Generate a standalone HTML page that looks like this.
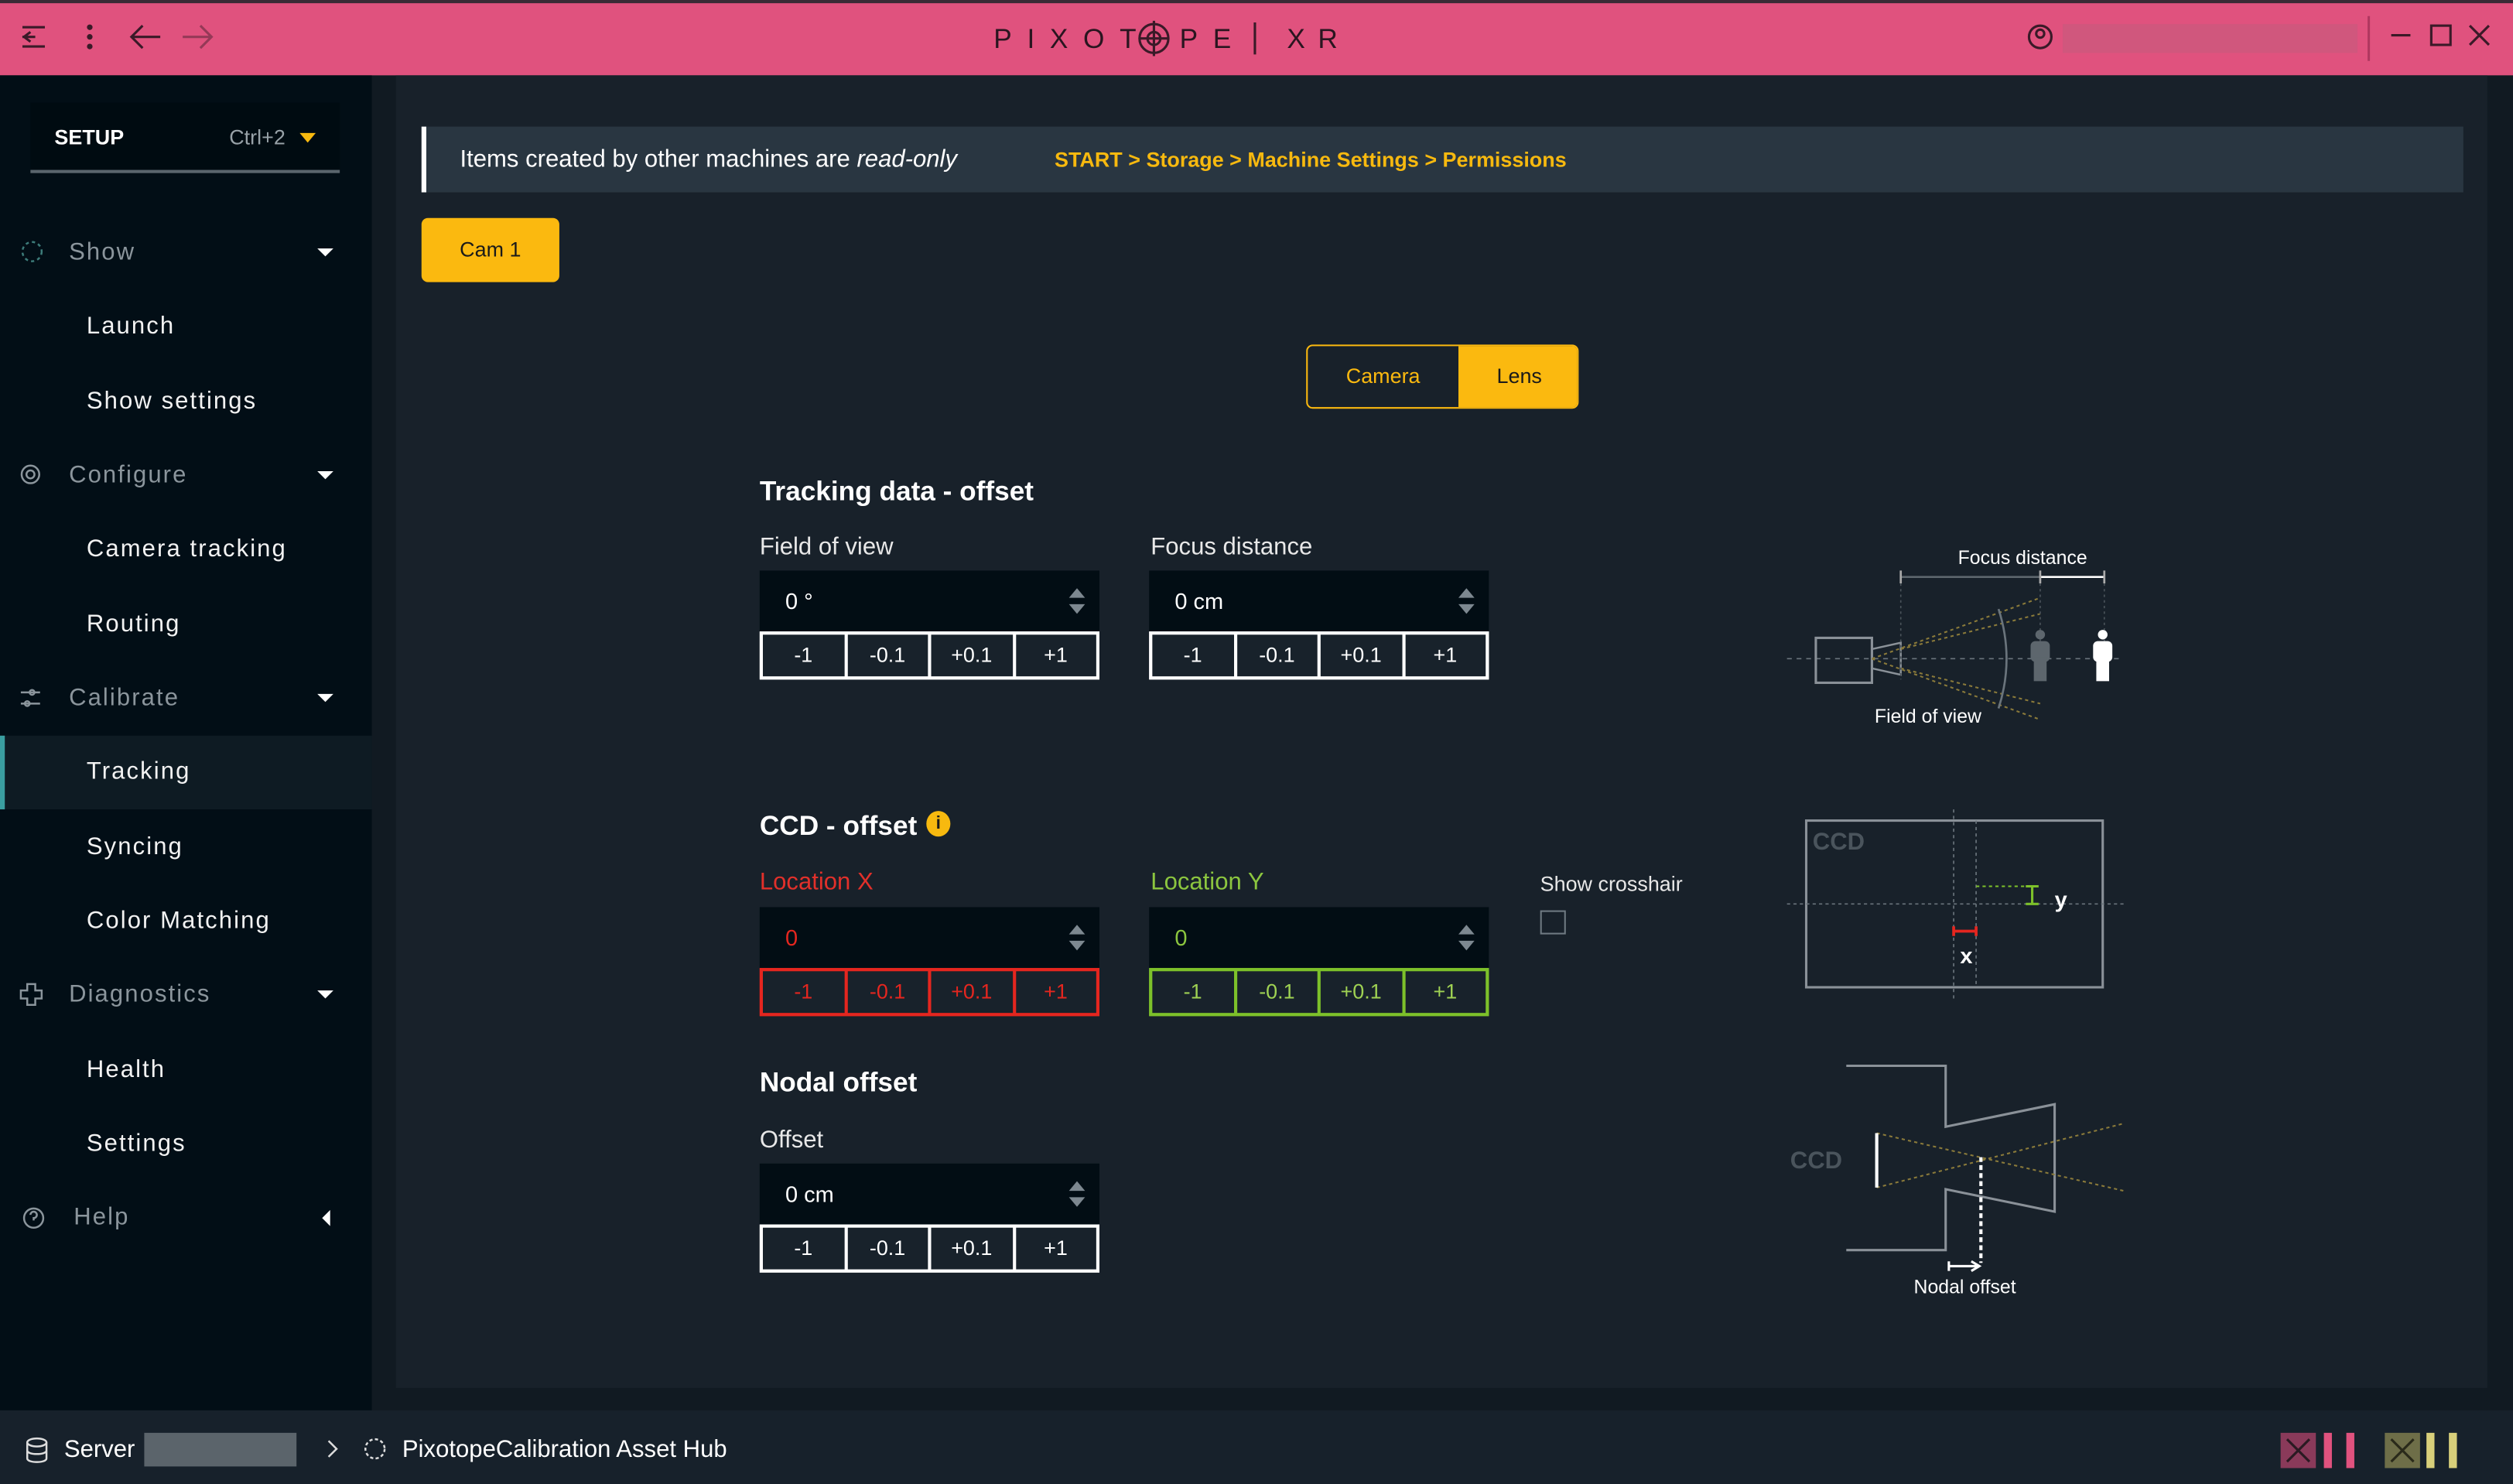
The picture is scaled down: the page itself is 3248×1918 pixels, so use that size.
<!DOCTYPE html>
<html><head><meta charset="utf-8">
<style>
*{box-sizing:border-box;margin:0;padding:0}
html,body{width:3248px;height:1918px;overflow:hidden;background:#17202a}
#s{position:absolute;left:0;top:0;width:1568px;height:926px;transform:scale(2.07143);transform-origin:0 0;font-family:"Liberation Sans",sans-serif;color:#fff;background:#111a22}
.a{position:absolute}
.menu{position:absolute;left:0;font-size:15px;letter-spacing:1px;white-space:nowrap}
.cat{color:#8b959c;left:43px}
.sub{color:#f2f2f2;left:54px}
.car{position:absolute;left:198px;width:0;height:0;border-left:5px solid transparent;border-right:5px solid transparent;border-top:5px solid #fff}
.inp{position:absolute;width:212px;height:38px;background:#020d14;font-size:14px;padding:11px 16px}
.sp{position:absolute;right:9px;top:11px;width:0;height:0;border-left:5px solid transparent;border-right:5px solid transparent;border-bottom:6px solid #7d8890}
.sp2{position:absolute;right:9px;top:21px;width:0;height:0;border-left:5px solid transparent;border-right:5px solid transparent;border-top:6px solid #7d8890}
.row{position:absolute;width:212px;height:30px;display:flex;border:2px solid #fff;background:#fff;gap:2px}
.row div{flex:1;background:#18222b;font-size:13px;text-align:center;line-height:26px;color:#fff}
.row.r{border-color:#e5261f;background:#e5261f}.row.r div{color:#e5261f}
.row.g{border-color:#7dc12a;background:#7dc12a}.row.g div{color:#9fd253}
.h{position:absolute;font-size:17px;font-weight:bold}
.l{position:absolute;font-size:15px;color:#e8e8e8}
</style></head><body><div id="s">
<!-- titlebar -->
<div class="a" style="left:0;top:0;width:1568px;height:47px;background:#e0527e;border-top:2px solid #3a2a35"></div>
<svg class="a" style="left:0;top:0" width="1568" height="47">
<g stroke="#3a1a28" stroke-width="1.5" fill="none">
<path d="M14 17h14M14 23h8M14 29h14M19 20l-4 3 4 3"/>
<circle cx="56" cy="17" r="1" fill="#3a1a28"/><circle cx="56" cy="23" r="1" fill="#3a1a28"/><circle cx="56" cy="29" r="1" fill="#3a1a28"/>
<path d="M100 23H83M89 16l-7 7 7 7"/>
<path d="M114 23h17M125 16l7 7-7 7" opacity=".45"/>
<circle cx="1273" cy="23" r="7"/><circle cx="1273" cy="21" r="2.5"/>
<path d="M1478 10v28" stroke="#b03860"/>
<path d="M1492 22h12"/><rect x="1517" y="16" width="12" height="12"/><path d="M1541 16l12 12M1553 16l-12 12"/>
<circle cx="720" cy="24" r="9"/><circle cx="720" cy="24" r="4"/><path d="M720 13v22M711 24h18"/>
<path d="M783 14v20"/>
</g>
<rect x="1287" y="15" width="184" height="18" fill="#c95a7e" opacity=".7"/>
<text x="620" y="30" font-size="17" letter-spacing="9.5" fill="#2a1520" font-family="Liberation Sans">PIXOT</text>
<text x="736" y="30" font-size="17" letter-spacing="9.5" fill="#2a1520" font-family="Liberation Sans">PE</text>
<text x="803" y="30" font-size="17" letter-spacing="8" fill="#2a1520" font-family="Liberation Sans">XR</text>
</svg>
<!-- sidebar -->
<div class="a" style="left:0;top:47px;width:232px;height:833px;background:#020e16"></div>
<div class="a" style="left:247px;top:47px;width:1305px;height:819px;background:#18212a"></div>
<div class="a" style="left:19px;top:64px;width:193px;height:44px;background:#000b11;border-bottom:2px solid #5a656d"></div>
<div class="a" style="left:34px;top:78px;font-size:13px;font-weight:bold">SETUP</div>
<div class="a" style="left:143px;top:78px;font-size:13px;color:#98a2a8">Ctrl+2</div>
<div class="a" style="left:187px;top:83px;border-left:5px solid transparent;border-right:5px solid transparent;border-top:6px solid #f7b90f"></div>
<div class="a" style="left:0;top:459px;width:232px;height:46px;background:#0e1b23;border-left:3px solid #3a9ea0"></div>
<svg class="a" style="left:0;top:0" width="40" height="780"><g stroke="#8b959c" fill="none" stroke-width="1.2">
<circle cx="20" cy="157" r="6" stroke="#3d7c7a" stroke-dasharray="2 2"/>
<circle cx="19" cy="296" r="5.5"/><circle cx="19" cy="296" r="2.5"/>
<path d="M13 432h12M13 439h12"/><circle cx="20" cy="432" r="1.5"/><circle cx="17" cy="439" r="1.5"/>
<path d="M17 614h5v4h4v5h-4v4h-5v-4h-4v-5h4z"/>
<circle cx="21" cy="760" r="6"/><path d="M19 758a2 2 0 1 1 2 2v1.5"/>
</g></svg>
<div class="menu cat" style="top:149px">Show</div><div class="car" style="top:155px"></div>
<div class="menu sub" style="top:195px">Launch</div>
<div class="menu sub" style="top:242px">Show settings</div>
<div class="menu cat" style="top:288px">Configure</div><div class="car" style="top:294px"></div>
<div class="menu sub" style="top:334px">Camera tracking</div>
<div class="menu sub" style="top:381px">Routing</div>
<div class="menu cat" style="top:427px">Calibrate</div><div class="car" style="top:433px"></div>
<div class="menu sub" style="top:473px">Tracking</div>
<div class="menu sub" style="top:520px">Syncing</div>
<div class="menu sub" style="top:566px">Color Matching</div>
<div class="menu cat" style="top:612px">Diagnostics</div><div class="car" style="top:618px"></div>
<div class="menu sub" style="top:659px">Health</div>
<div class="menu sub" style="top:705px">Settings</div>
<div class="menu cat" style="top:751px;left:46px">Help</div>
<div class="a" style="left:201px;top:755px;border-top:5px solid transparent;border-bottom:5px solid transparent;border-right:5px solid #fff"></div>
<!-- banner -->
<div class="a" style="left:263px;top:79px;width:1274px;height:41px;background:#293641;border-left:3px solid #fff"></div>
<div class="a" style="left:287px;top:91px;font-size:15px">Items created by other machines are <i>read-only</i></div>
<div class="a" style="left:658px;top:92px;font-size:13px;font-weight:bold;color:#f7b90f">START &gt; Storage &gt; Machine Settings &gt; Permissions</div>
<div class="a" style="left:263px;top:136px;width:86px;height:40px;background:#fbb90f;border-radius:4px;color:#1a1a1a;font-size:13px;text-align:center;line-height:40px">Cam 1</div>
<div class="a" style="left:815px;top:215px;width:170px;height:40px;border:1px solid #fbb90f;border-radius:4px;overflow:hidden">
<div class="a" style="left:0;top:0;width:94px;height:38px;color:#fbb90f;font-size:13px;text-align:center;line-height:38px">Camera</div>
<div class="a" style="left:94px;top:0;width:76px;height:38px;background:#fbb90f;color:#1a1a1a;font-size:13px;text-align:center;line-height:38px">Lens</div></div>
<!-- tracking -->
<div class="h" style="left:474px;top:297px">Tracking data - offset</div>
<div class="l" style="left:474px;top:333px">Field of view</div>
<div class="l" style="left:718px;top:333px">Focus distance</div>
<div class="inp" style="left:474px;top:356px">0 °<div class="sp"></div><div class="sp2"></div></div>
<div class="inp" style="left:717px;top:356px">0 cm<div class="sp"></div><div class="sp2"></div></div>
<div class="row" style="left:474px;top:394px"><div>-1</div><div>-0.1</div><div>+0.1</div><div>+1</div></div>
<div class="row" style="left:717px;top:394px"><div>-1</div><div>-0.1</div><div>+0.1</div><div>+1</div></div>
<div class="h" style="left:474px;top:506px">CCD - offset</div>
<div class="a" style="left:578px;top:506px;width:15px;height:16px;border-radius:50%;background:#f7b90f;color:#1a1a1a;font-size:11px;font-weight:bold;text-align:center;line-height:16px">i</div>
<div class="l" style="left:474px;top:542px;color:#e2302a">Location X</div>
<div class="l" style="left:718px;top:542px;color:#8cc63f">Location Y</div>
<div class="inp" style="left:474px;top:566px;color:#e5261f">0<div class="sp"></div><div class="sp2"></div></div>
<div class="inp" style="left:717px;top:566px;color:#8cc63f">0<div class="sp"></div><div class="sp2"></div></div>
<div class="row r" style="left:474px;top:604px"><div>-1</div><div>-0.1</div><div>+0.1</div><div>+1</div></div>
<div class="row g" style="left:717px;top:604px"><div>-1</div><div>-0.1</div><div>+0.1</div><div>+1</div></div>
<div class="a" style="left:961px;top:544px;font-size:13px;color:#e8e8e8">Show crosshair</div>
<div class="a" style="left:961px;top:568px;width:16px;height:15px;border:1px solid #6f7a82"></div>
<div class="h" style="left:474px;top:666px">Nodal offset</div>
<div class="l" style="left:474px;top:703px">Offset</div>
<div class="inp" style="left:474px;top:726px">0 cm<div class="sp"></div><div class="sp2"></div></div>
<div class="row" style="left:474px;top:764px"><div>-1</div><div>-0.1</div><div>+0.1</div><div>+1</div></div>
<!-- diagrams -->
<svg class="a" style="left:0;top:0" width="1568" height="926" font-family="Liberation Sans">
<g fill="none">
<path d="M1115 411H1325" stroke="#6a747c" stroke-dasharray="3 3" stroke-width=".8"/>
<rect x="1133" y="398" width="35" height="28" stroke="#8a9198" stroke-width="1.5"/>
<path d="M1168 405l18-4v20l-18-4" stroke="#8a9198" stroke-width="1.2"/>
<path d="M1168 411l105-38M1168 411l105 38M1186 405l87-22M1186 417l87 22" stroke="#8a7a3a" stroke-dasharray="2 2" stroke-width="1"/>
<path d="M1247 380q10 31 0 62" stroke="#6a747c" stroke-width="1.3"/>
<path d="M1186 360h87" stroke="#5d666d" stroke-width="1.3"/><path d="M1273 360h40" stroke="#fff" stroke-width="1.3"/>
<path d="M1186 356v8M1273 356v8M1313 356v8" stroke="#aaa" stroke-width="1.3"/>
<path d="M1186 364v60M1273 364v55M1313 364v55" stroke="#4a535a" stroke-dasharray="1.5 2" stroke-width=".8"/>
</g>
<g fill="#5d666d"><circle cx="1273" cy="396" r="3"/><rect x="1267" y="400" width="12" height="13" rx="3"/><rect x="1269" y="410" width="8" height="15"/></g>
<g fill="#fff"><circle cx="1312" cy="396" r="3"/><rect x="1306" y="400" width="12" height="13" rx="3"/><rect x="1308" y="410" width="8" height="15"/></g>
<text x="1262" y="352" font-size="12" fill="#fff" text-anchor="middle">Focus distance</text>
<text x="1203" y="451" font-size="12" fill="#fff" text-anchor="middle">Field of view</text>
<rect x="1127" y="512" width="185" height="104" fill="none" stroke="#8a9198" stroke-width="1.5"/>
<text x="1131" y="530" font-size="15" font-weight="bold" fill="#4a545c">CCD</text>
<path d="M1115 564H1325M1219 505V623M1233 512V616" stroke="#6a747c" stroke-dasharray="2 2" stroke-width=".8" fill="none"/>
<path d="M1233 553H1270" stroke="#7dc12a" stroke-dasharray="2 2" stroke-width="1"/>
<path d="M1264 553h8M1268 553v11M1264 564h8" stroke="#7dc12a" stroke-width="1.5"/>
<path d="M1219 581h14M1219 578v6M1233 578v6" stroke="#e5261f" stroke-width="1.8"/>
<text x="1282" y="566" font-size="14" font-weight="bold" fill="#fff">y</text>
<text x="1223" y="601" font-size="14" font-weight="bold" fill="#fff">x</text>
<path d="M1152 665h62v38l68-14v67l-68-14v38h-62" fill="none" stroke="#8a9198" stroke-width="1.5"/>
<text x="1117" y="729" font-size="15" font-weight="bold" fill="#4a545c">CCD</text>
<path d="M1171 707l154 36M1171 741l154-40" stroke="#8a7a3a" stroke-dasharray="2 2" fill="none"/>
<path d="M1171 707v34" stroke="#fff" stroke-width="2"/>
<path d="M1236 722v66" stroke="#fff" stroke-width="2" stroke-dasharray="3 2"/>
<path d="M1216 790h18M1216 787v6M1230 787l5 3-5 3" stroke="#fff" stroke-width="1.5" fill="none"/>
<text x="1226" y="807" font-size="12" fill="#fff" text-anchor="middle">Nodal offset</text>
</svg>
<!-- bottom -->
<div class="a" style="left:0;top:880px;width:1568px;height:46px;background:#17212b"></div>
<svg class="a" style="left:0;top:880px" width="1568" height="46"><g stroke="#ddd" fill="none" stroke-width="1.2">
<ellipse cx="23" cy="20" rx="6" ry="2.5"/><path d="M17 20v10c0 3 12 3 12 0V20M17 25c0 3 12 3 12 0"/>
<path d="M205 19l5 5-5 5"/><circle cx="234" cy="24" r="6" stroke-dasharray="2 1.5"/>
</g>
<rect x="90" y="14" width="95" height="21" fill="#6d767c" opacity=".8"/>
<rect x="1423" y="14" width="22" height="22" fill="#8a3a5a"/><path d="M1427 18l14 14M1441 18l-14 14" stroke="#2a1a22" stroke-width="1.5"/>
<rect x="1450" y="14" width="5" height="22" fill="#e0527e"/><rect x="1464" y="14" width="5" height="22" fill="#e0527e"/>
<rect x="1488" y="14" width="22" height="22" fill="#6e6e48"/><path d="M1492 18l14 14M1506 18l-14 14" stroke="#2a2a1a" stroke-width="1.5"/>
<rect x="1514" y="14" width="5" height="22" fill="#d8cf7a"/><rect x="1528" y="14" width="5" height="22" fill="#d8cf7a"/>
</svg>
<div class="a" style="left:40px;top:896px;font-size:15px">Server</div>
<div class="a" style="left:251px;top:896px;font-size:15px">PixotopeCalibration Asset Hub</div>
</div></body></html>
